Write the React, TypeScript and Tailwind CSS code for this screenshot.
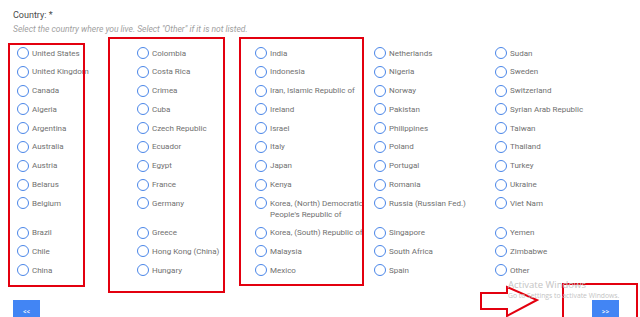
import React from "react";

const columns: string[][] = [
  ["United States", "United Kingdom", "Canada", "Algeria", "Argentina", "Australia", "Austria", "Belarus", "Belgium", "Brazil", "Chile", "China"],
  ["Colombia", "Costa Rica", "Crimea", "Cuba", "Czech Republic", "Ecuador", "Egypt", "France", "Germany", "Greece", "Hong Kong (China)", "Hungary"],
  ["India", "Indonesia", "Iran, Islamic Republic of", "Ireland", "Israel", "Italy", "Japan", "Kenya", "Korea, (North) Democratic People's Republic of", "Korea, (South) Republic of", "Malaysia", "Mexico"],
  ["Netherlands", "Nigeria", "Norway", "Pakistan", "Philippines", "Poland", "Portugal", "Romania", "Russia (Russian Fed.)", "Singapore", "South Africa", "Spain"],
  ["Sudan", "Sweden", "Switzerland", "Syrian Arab Republic", "Taiwan", "Thailand", "Turkey", "Ukraine", "Viet Nam", "Yemen", "Zimbabwe", "Other"],
];

// grid is row-major so that rows line up across columns
const cells: string[] = [];
for (let r = 0; r < 12; r++) {
  for (let c = 0; c < 5; c++) cells.push(columns[c][r]);
}

function Option({ label }: { label: string }) {
  return (
    <label className="flex items-start gap-[3px] cursor-pointer">
      <span className="shrink-0 w-[12px] h-[12px] rounded-full border-[1.3px] border-[#4a86e8] bg-white" />
      <span className="text-[8px] leading-[11px] pt-[0.5px] text-[#707070] pr-[10px]">{label}</span>
    </label>
  );
}

export default function App() {
  return (
    <div
      className="relative w-[640px] h-[317px] overflow-hidden bg-white"
      style={{ fontFamily: "Roboto, 'Liberation Sans', sans-serif" }}
    >
      <div className="pt-[9px] pl-[13px]">
        <p className="text-[9px] leading-[12px] text-[#4a4a4a]">Country: *</p>
        <p className="mt-[2px] text-[8.5px] leading-[12px] italic text-[#a0a0a0]">
          Select the country where you live. Select "Other" if it is not listed.
        </p>
      </div>

      {/* options */}
      <div className="mt-[12px] ml-[17px] grid grid-cols-[120px_118px_119px_121px_120px] gap-y-[6.8px]">
        {cells.map((c) => (
          <Option key={c} label={c} />
        ))}
      </div>

      {/* nav buttons */}
      <div className="mt-[24px] flex justify-between pl-[13px] pr-[21px]">
        <button className="w-[27px] h-[24px] bg-[#4285f4] text-white text-[7px] leading-[24px]">&lt;&lt;</button>
        <button className="w-[27px] h-[24px] bg-[#4285f4] text-white text-[7px] leading-[24px]">&gt;&gt;</button>
      </div>

      {/* red annotation boxes */}
      <div className="absolute left-[8px] top-[43px] w-[77px] h-[244px] border-2 border-[#e3000f]" />
      <div className="absolute left-[108px] top-[37px] w-[117px] h-[256px] border-2 border-[#e3000f]" />
      <div className="absolute left-[239px] top-[37px] w-[125px] h-[249px] border-2 border-[#e3000f]" />
      <div className="absolute left-[562px] top-[283px] w-[76px] h-[40px] border-2 border-[#e3000f]" />

      {/* arrow */}
      <svg className="absolute left-[478px] top-[284px]" width="64" height="36" viewBox="0 0 64 36">
        <path d="M3 9 H29 V3 L59 16 L29 32 V25 H3 Z" fill="none" stroke="#e3000f" strokeWidth="2" />
      </svg>

      {/* windows watermark */}
      <div
        className="absolute left-[508px] top-[278px] text-[#c4c4c4]"
        style={{ fontFamily: "'Open Sans', 'Liberation Sans', sans-serif" }}
      >
        <p className="text-[9.5px] leading-[13px]">Activate Windows</p>
        <p className="text-[6.8px] leading-[9px]">Go to Settings to activate Windows.</p>
      </div>
    </div>
  );
}
